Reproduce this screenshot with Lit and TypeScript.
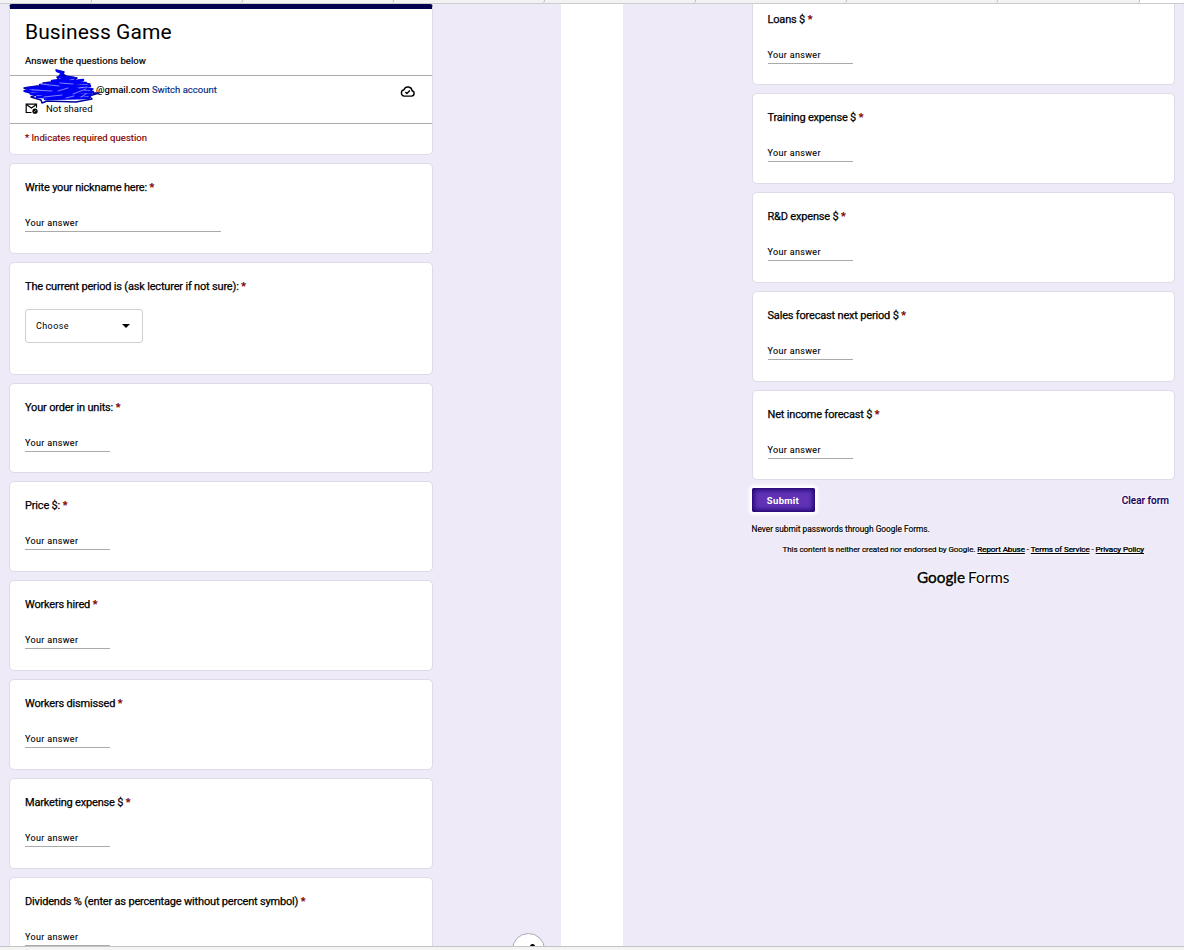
import { LitElement, html, css, svg } from 'lit';
import { customElement, property } from 'lit/decorators.js';
import { classMap } from 'lit/directives/class-map.js';

interface Question {
  label: string;
  type?: 'short' | 'wide' | 'select';
}

const FIRST_PAGE: Question[] = [
  { label: 'Write your nickname here:', type: 'wide' },
  { label: 'The current period is (ask lecturer if not sure):', type: 'select' },
  { label: 'Your order in units:' },
  { label: 'Price $:' },
  { label: 'Workers hired' },
  { label: 'Workers dismissed' },
  { label: 'Marketing expense $' },
  { label: 'Dividends % (enter as percentage without percent symbol)' },
];

const SECOND_PAGE: Question[] = [
  { label: 'Loans $' },
  { label: 'Training expense $' },
  { label: 'R&D expense $' },
  { label: 'Sales forecast next period $' },
  { label: 'Net income forecast $' },
];

const cloudIcon = svg`
  <path d="M4.2 11.1h7.4a2.7 2.7 0 0 0 .5-5.3A4.2 4.2 0 0 0 4 4.7a3.25 3.25 0 0 0 .2 6.4z" />
  <path d="M5.3 6.9l1.6 1.6 3-3.1" />
`;

const mailIcon = svg`
  <path d="M6.5 9.5H1.2V1.2h10.3v3.6" />
  <path d="M1.4 1.6l5 3.4 5-3.4" />
  <circle class="badge" cx="10" cy="8.2" r="2.6" />
  <path class="slash" d="M9 9.2l2-2" />
`;

@customElement('form-question')
export class FormQuestion extends LitElement {
  static styles = css`
    :host {
      display: block;
      flex: none;
    }

    .card {
      box-sizing: border-box;
      height: 90.8px;
      padding: 16px 15px 0;
      border: 1px solid #dddbe5;
      border-radius: 5px;
      background-color: #fff;
    }

    .card.select {
      height: 112.8px;
    }

    .label {
      font-size: 11px;
      line-height: 16px;
      letter-spacing: -0.18px;
      color: #000;
      -webkit-text-stroke: 0.25px #000;
    }

    .required {
      color: #7c0000;
      -webkit-text-stroke-color: #7c0000;
    }

    .answer {
      width: 85px;
      margin-top: 19px;
      border-bottom: 1px solid #aaa;
      font-size: 9px;
      line-height: 16px;
      letter-spacing: 0.34px;
      color: #000;
      -webkit-text-stroke: 0.1px #000;
    }

    .wide .answer {
      width: 196px;
    }

    .dropdown {
      box-sizing: border-box;
      display: flex;
      align-items: center;
      justify-content: space-between;
      width: 118px;
      height: 34px;
      margin-top: 14px;
      padding: 0 12px 0 10px;
      border: 1px solid #d0d0d0;
      border-radius: 3px;
      font-size: 9px;
      letter-spacing: 0.4px;
      color: #000;
    }

    .arrow {
      border: 4px solid transparent;
      border-top-color: #000;
      border-bottom: none;
    }
  `;

  @property() label = '';
  @property() type = 'short';

  render() {
    return html`
      <div class=${classMap({ card: true, [this.type]: true })}>
        <div class="label">${this.label} <span class="required">*</span></div>
        ${this.type === 'select'
          ? html`<div class="dropdown">Choose<span class="arrow"></span></div>`
          : html`<div class="answer">Your answer</div>`}
      </div>
    `;
  }
}

@customElement('app-root')
export class AppRoot extends LitElement {
  static styles = css`
    :host {
      display: flex;
      flex-direction: column;
      position: relative;
      height: 950px;
      overflow: hidden;
      font-family: Roboto, sans-serif;
      color: #000;
      background-color: #fff;
    }

    svg {
      display: block;
      fill: none;
      stroke: #000;
      stroke-width: 1.4;
    }

    .tabs {
      box-sizing: border-box;
      flex: none;
      display: grid;
      grid-template-columns: 92px 151px 151px 151px 151px 151px 151px 142px 1fr;
      height: 4px;
      border-bottom: 1px solid #ccc;
      background-color: #f3f3f3;
    }

    .tab {
      border-right: 1px solid #bbb;
      border-bottom-right-radius: 3px;
    }

    .tab:last-child {
      border: none;
      background-color: #fff;
    }

    .pages {
      flex: 1;
      min-height: 0;
      display: grid;
      grid-template-columns: 561px 561px;
      gap: 62px;
    }

    .page {
      overflow: hidden;
      background-color: #eeeaf8;
    }

    .column {
      display: flex;
      flex-direction: column;
      gap: 8px;
      width: 424px;
      margin-left: 9px;
    }

    .second .column {
      width: 423.5px;
      margin-left: 128.5px;
      margin-top: -9.5px;
    }

    .header {
      box-sizing: border-box;
      flex: none;
      height: 151px;
      border: 1px solid #dddbe5;
      border-top: 5px solid #02004e;
      border-radius: 3px 3px 5px 5px;
      background-color: #fff;
      box-shadow: 0 -144px 0 -144px #fff;
    }

    .intro {
      box-sizing: border-box;
      height: 66px;
      padding: 10px 15px 0;
    }

    h1 {
      margin: 0;
      font-size: 21px;
      font-weight: 400;
      line-height: 26px;
      letter-spacing: 0.1px;
    }

    .description {
      margin-top: 9px;
      font-size: 9.5px;
      line-height: 14px;
      letter-spacing: 0.08px;
      -webkit-text-stroke: 0.2px #000;
    }

    .account {
      box-sizing: border-box;
      display: flex;
      justify-content: space-between;
      height: 49px;
      padding: 6px 16px 0 15px;
      border: solid #aaa;
      border-width: 1px 0;
    }

    .account > svg {
      margin-top: 3px;
    }

    .row {
      display: flex;
      align-items: center;
      height: 14px;
      font-size: 9.5px;
    }

    .row + .row {
      gap: 8px;
      margin-top: 5px;
    }

    .row svg {
      stroke-width: 1.2;
    }

    .badge {
      fill: #000;
      stroke: none;
    }

    .slash {
      stroke: #fff;
      stroke-width: 0.7;
    }

    .email {
      margin-left: 71px;
      font-weight: 500;
    }

    .switch {
      margin-left: 2.5px;
      color: #002b7f;
      -webkit-text-stroke: 0.15px #002b7f;
    }

    .scribble {
      position: absolute;
      left: 22px;
      top: 68px;
      stroke: #0000f5;
      stroke-width: 2.6;
      stroke-linecap: round;
      stroke-linejoin: round;
    }

    .scribble .edge {
      stroke: #00009c;
      stroke-width: 1.5;
    }

    .scribble .gap {
      stroke: #b9b9ff;
      stroke-width: 0.7;
    }

    .notice {
      padding: 7px 15px;
      font-size: 9.5px;
      line-height: 14px;
      letter-spacing: 0.03px;
      color: #7c0000;
      -webkit-text-stroke: 0.15px #7c0000;
    }

    .actions {
      display: flex;
      align-items: center;
      justify-content: space-between;
      height: 24px;
      padding-right: 6px;
    }

    .submit {
      width: 63px;
      height: 24px;
      padding: 0;
      border: none;
      border-radius: 2px;
      font: 700 9.5px Roboto, sans-serif;
      letter-spacing: 0.3px;
      color: #fff;
      background-color: #6133b4;
      box-shadow: inset 0 0 5px 2px #1c006c, 0 0 3px 3px #fff;
    }

    .clear {
      font-size: 10px;
      font-weight: 500;
      color: #1c005f;
      -webkit-text-stroke: 0.15px #1c005f;
      text-shadow: 0 0 2px #fff, 0 0 2px #fff, 0 0 3px #fff, 0 0 4px #fff;
    }

    .footer {
      font-size: 8.3px;
      line-height: 12px;
      -webkit-text-stroke: 0.2px #000;
      text-shadow: 0 0 2px #fff, 0 0 2px #fff, 0 0 3px #fff, 0 0 4px #fff;
    }

    .footer p {
      margin: 3px 0 9px;
    }

    .footer .legal {
      margin: 0;
      font-size: 8px;
      letter-spacing: -0.06px;
      text-align: center;
    }

    .footer .legal span {
      text-decoration: underline;
    }

    .logo {
      display: flex;
      justify-content: center;
      gap: 3px;
      margin-top: 11px;
      font-family: Lato, sans-serif;
      font-size: 15.3px;
      line-height: 20px;
      -webkit-text-stroke: 0;
    }

    .google {
      -webkit-text-stroke: 0.4px #000;
    }

    .fab {
      position: absolute;
      left: 512px;
      top: 933px;
      box-sizing: border-box;
      width: 33px;
      height: 33px;
      padding: 10px 0 0 17px;
      border: 1px solid #aaa7b3;
      border-radius: 50%;
      background-color: #fff;
    }

    .dot {
      width: 5px;
      height: 5px;
      border-radius: 50%;
      background-color: #000;
    }

    .status {
      position: relative;
      box-sizing: border-box;
      flex: none;
      height: 4px;
      border-top: 1px solid #c4c4c4;
      background-color: #f4f4f4;
    }
  `;

  renderQuestions(questions: Question[]) {
    return questions.map(
      (question) =>
        html`<form-question
          label=${question.label}
          type=${question.type ?? 'short'}
        ></form-question>`
    );
  }

  renderHeader() {
    return html`
      <div class="header">
        <div class="intro">
          <h1>Business Game</h1>
          <div class="description">Answer the questions below</div>
        </div>
        <div class="account">
          <div>
            <div class="row">
              <span class="email">@gmail.com</span>
              <span class="switch">Switch account</span>
            </div>
            <div class="row">
              <svg width="13" height="11" viewBox="0 0 13 11">${mailIcon}</svg>
              <span>Not shared</span>
            </div>
          </div>
          <svg width="16" height="13" viewBox="0 0 16 13">${cloudIcon}</svg>
        </div>
        <div class="notice">* Indicates required question</div>
      </div>
    `;
  }

  renderScribble() {
    return html`
      <svg class="scribble" width="80" height="36" viewBox="0 0 80 36">
        <path
          class="edge"
          d="M34 2l8 2-4 3 17 3-5 4 18 2-6 4 9 1-5 4 11 0-10 3 3 3-16 3-29-1-5 2-1-3-10-3 5-2-12-4 5-1-5-2 13-2 10 1-4-4 17-2-3-4 9-1z"
        />
        <path
          d="M35 3l6 2-4 4 15 1-22 3 34 2-46 2 50 1-62 2 63 1-66 2 68 1-62 2 60 1-54 2 52 1-44 1 36-1M25 16l36-4M20 29l12-13 6 14 8-19 8 19 10-12"
        />
        <path
          class="gap"
          d="M19 16l18 2M38 15l13 1M10 22l20 1M36 23l10-3M51 26l13-5M22 29l18-2M44 30l8-2M57 20l8-1M59 29l5-3"
        />
      </svg>
    `;
  }

  render() {
    return html`
      <div class="tabs">
        ${Array.from({ length: 9 }, () => html`<div class="tab"></div>`)}
      </div>

      <div class="pages">
        <div class="page">
          <div class="column">
            ${this.renderHeader()} ${this.renderQuestions(FIRST_PAGE)}
          </div>
        </div>

        <div class="page second">
          <div class="column">
            ${this.renderQuestions(SECOND_PAGE)}
            <div class="actions">
              <button class="submit">Submit</button>
              <span class="clear">Clear form</span>
            </div>
            <div class="footer">
              <p>Never submit passwords through Google Forms.</p>
              <p class="legal">
                This content is neither created nor endorsed by Google.
                <span>Report Abuse</span> - <span>Terms of Service</span> -
                <span>Privacy Policy</span>
              </p>
              <div class="logo">
                <span class="google">Google</span><span>Forms</span>
              </div>
            </div>
          </div>
        </div>
      </div>

      ${this.renderScribble()}
      <div class="fab"><div class="dot"></div></div>
      <div class="status"></div>
    `;
  }
}
